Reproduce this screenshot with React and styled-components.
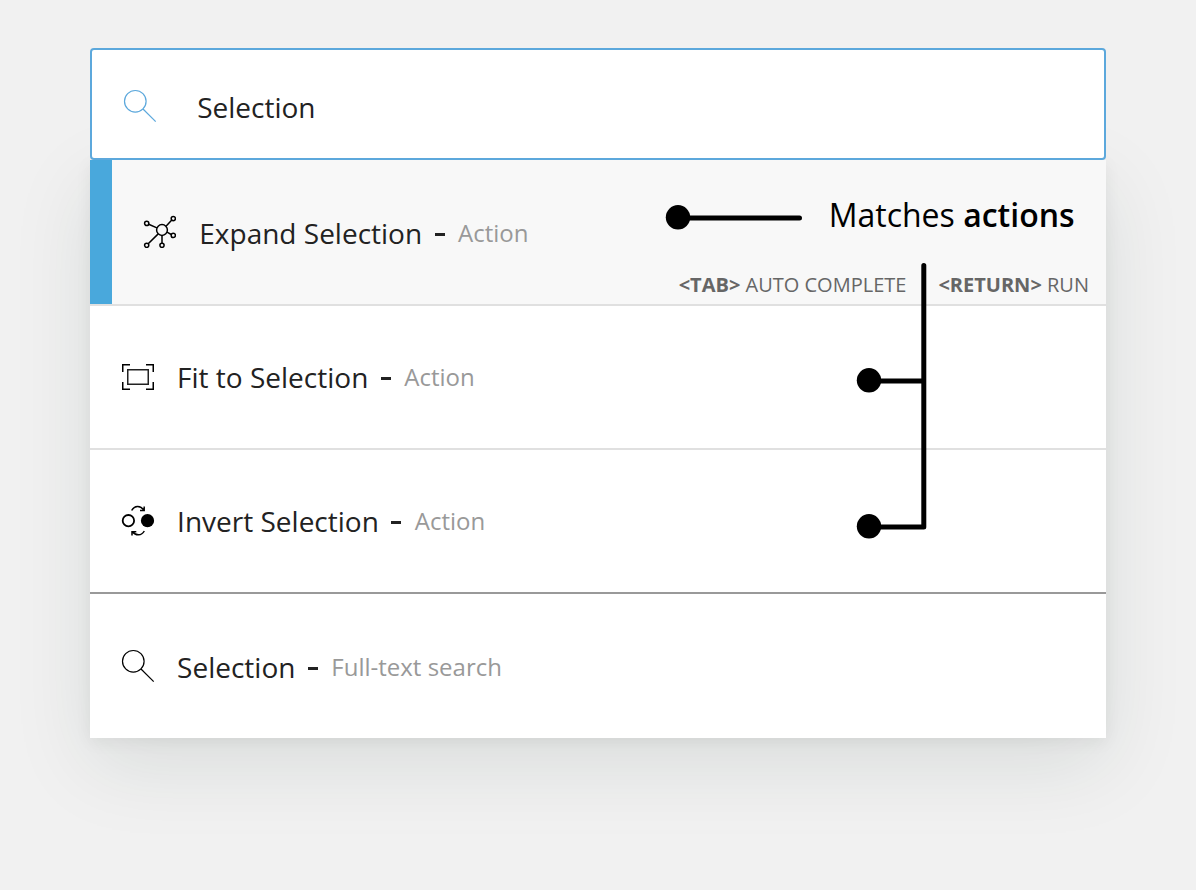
import React from 'react';
import styled, { createGlobalStyle } from 'styled-components';

const GlobalStyle = createGlobalStyle`
  * { box-sizing: border-box; }
  body {
    margin: 0;
    background: #f1f1f1;
    font-family: "Open Sans", "Noto Sans", sans-serif;
    color: #222;
  }
`;

const Page = styled.main`
  height: 890px;
  padding: 48px 90px 0;
  overflow: hidden;
`;

const Palette = styled.section`
  position: relative;
  width: 1016px;
  height: 690px;
`;

const SearchBox = styled.div`
  position: relative;
  z-index: 1;
  display: flex;
  align-items: center;
  height: 112px;
  padding: 6px 0 0 31px;
  border: 2px solid #5ca8dc;
  border-radius: 4px;
  background: #fff;
`;

const Query = styled.span`
  margin-left: 40.2px;
  font-size: 28px;
  line-height: 40px;
`;

const SearchIcon = styled.svg`
  flex: none;
  width: 34px;
  height: 34px;
  margin-top: ${(p) => p.$shift || 0}px;
  fill: none;
  stroke: ${(p) => p.$color || '#000'};
  stroke-width: 1.2;
`;

const Results = styled.ul`
  margin: 0;
  padding: 0;
  list-style: none;
  background: #fff;
  box-shadow: 0 26px 76px rgba(20, 50, 40, 0.1), 0 4px 16px rgba(0, 0, 0, 0.06);
`;

const Result = styled.li`
  position: relative;
  display: flex;
  align-items: center;
  height: ${(p) => (p.$selected ? 146 : 144)}px;
  padding-left: ${(p) => (p.$selected ? 52 : 31)}px;
  padding-top: ${(p) => p.$top || 0}px;
  border-bottom: ${(p) => (p.$line ? `2px solid ${p.$line}` : '0')};
  box-shadow: ${(p) => (p.$selected ? 'inset 22px 0 #49a8dc' : 'none')};
  background: ${(p) => (p.$selected ? '#f8f8f8' : '#fff')};
`;

const Glyph = styled.svg`
  flex: none;
  width: 34px;
  height: 34px;
  margin-top: ${(p) => p.$shift || 0}px;
  fill: none;
  stroke: #000;
  stroke-width: 1.5;
`;

const Title = styled.span`
  margin-left: ${(p) => (p.$selected ? 23.3 : 22.1)}px;
  font-size: 28px;
  line-height: 40px;
`;

const Dash = styled.span`
  width: 10px;
  height: 3px;
  margin: 3px 13.4px 0 12.5px;
  background: #222;
`;

const Kind = styled.span`
  font-size: 24px;
  line-height: 40px;
  color: #999;
`;

const Hints = styled.div`
  position: absolute;
  right: 17px;
  bottom: 5px;
  display: flex;
  gap: 32px;
  font-size: 20px;
  line-height: 28px;
  color: #666;
`;

const Callout = styled.div`
  position: absolute;
  z-index: 2;
  top: 145px;
  right: 31.4px;
  font-size: 32px;
  line-height: 44px;
  color: #000;

  strong { font-weight: 600; }
`;

const Connectors = styled.svg`
  position: absolute;
  z-index: 2;
  top: 112px;
  left: 560px;
  width: 300px;
  height: 400px;
  fill: #000;
  stroke: #000;
  stroke-width: 5;
  stroke-linecap: round;
  stroke-linejoin: round;

  circle { stroke: none; }
`;

function Magnifier({ color, shift }) {
  return (
    <SearchIcon viewBox="0 0 34 34" $color={color} $shift={shift}>
      <circle cx="12.3" cy="12.3" r="10.8" />
      <path d="M20 20 32.7 32.6" />
    </SearchIcon>
  );
}

function ExpandGlyph() {
  return (
    <Glyph viewBox="0 0 34 34" $shift={-4}>
      <circle cx="20" cy="16" r="5.4" />
      <circle cx="31.3" cy="4.6" r="2.1" />
      <circle cx="4.7" cy="9.4" r="2.1" />
      <circle cx="31.3" cy="21.4" r="2.1" />
      <circle cx="4.7" cy="31.3" r="2.1" />
      <circle cx="20" cy="31.3" r="2.1" />
      <path d="M24 12.2 29.8 6.1M14.9 13.9 6.7 10.3M25 18.2 29.3 20.5M16.2 19.9 6.2 29.8M20 21.4V29.2" />
    </Glyph>
  );
}

function FitGlyph() {
  return (
    <Glyph viewBox="0 0 34 34">
      <path d="M1.75 12V4.75H9M25 4.75h7.25V12M1.75 22v7.25H9M25 29.25h7.25V22" />
      <path d="M6.75 9.75H27.25V24.25H6.75Z" stroke="#222" />
    </Glyph>
  );
}

function InvertGlyph() {
  return (
    <Glyph viewBox="0 0 34 34">
      <circle cx="7.4" cy="16.7" r="5.7" strokeWidth="1.8" />
      <circle cx="26.5" cy="16.7" r="6.6" fill="#000" stroke="none" />
      <path d="M10.7 6.5C13.3 1.4 19.4 1.1 22.7 6M23.2 2.4V6.4H19M23.3 27C20.5 32 14.7 32 11.5 27.7M11 31.6V27.7h4.3" />
    </Glyph>
  );
}

function ResultLabel({ title, kind, selected }) {
  return (
    <>
      <Title $selected={selected}>{title}</Title>
      <Dash />
      <Kind>{kind}</Kind>
    </>
  );
}

export default function App() {
  return (
    <Page>
      <GlobalStyle />
      <Palette>
        <SearchBox>
          <Magnifier color="#5ca8dc" shift={-2} />
          <Query>Selection</Query>
        </SearchBox>
        <Results>
          <Result $selected $line="#e0e0e0" $top={2}>
            <ExpandGlyph />
            <ResultLabel selected title="Expand Selection" kind="Action" />
            <Hints>
              <span><b>&lt;TAB&gt;</b> AUTO COMPLETE</span>
              <span><b>&lt;RETURN&gt;</b> RUN</span>
            </Hints>
          </Result>
          <Result $line="#e0e0e0">
            <FitGlyph />
            <ResultLabel title="Fit to Selection" kind="Action" />
          </Result>
          <Result $line="#999">
            <InvertGlyph />
            <ResultLabel title="Invert Selection" kind="Action" />
          </Result>
          <Result $top={2}>
            <Magnifier shift={-2} />
            <ResultLabel title="Selection" kind="Full-text search" />
          </Result>
        </Results>
        <Callout>Matches <strong>actions</strong></Callout>
        <Connectors viewBox="0 0 300 400">
          <circle cx="28" cy="57.3" r="12.2" />
          <circle cx="219" cy="220.3" r="12.2" />
          <circle cx="219" cy="366.3" r="12.2" />
          <path fill="none" d="M28 58H149.5M273.8 105.5V367H219M219 221H273.8" />
        </Connectors>
      </Palette>
    </Page>
  );
}
